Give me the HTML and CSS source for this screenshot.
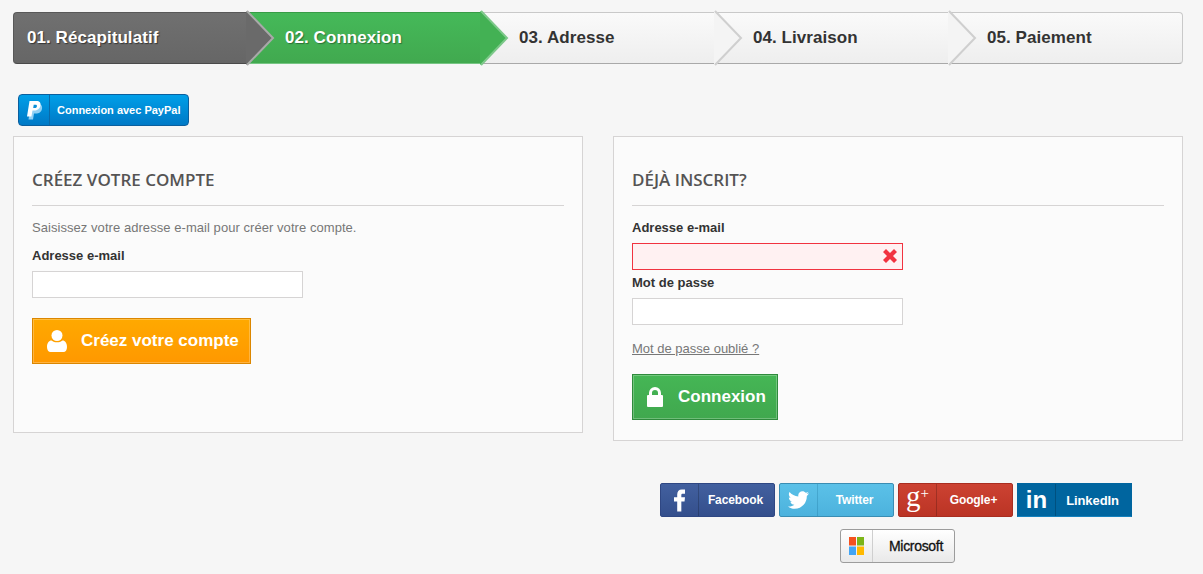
FILE: index.html
```html
<!DOCTYPE html>
<html lang="fr">
<head>
<meta charset="utf-8">
<title>Connexion</title>
<link rel="stylesheet" href="styles.css">
</head>
<body>
<div class="page">
  <ol class="steps">
    <li class="step step-done"><span>01. Récapitulatif</span><svg class="arrow" width="30" height="52" viewBox="0 0 30 52"><polygon points="-1,-1 26,26 -1,53"/><polyline points="0,-1 26,26 0,53"/></svg></li>
    <li class="step step-current"><span>02. Connexion</span><svg class="arrow" width="30" height="52" viewBox="0 0 30 52"><polygon points="-1,-1 26,26 -1,53"/><polyline points="0,-1 26,26 0,53"/></svg></li>
    <li class="step"><span>03. Adresse</span><svg class="arrow" width="30" height="52" viewBox="0 0 30 52"><polygon points="-1,-1 26,26 -1,53"/><polyline points="0,-1 26,26 0,53"/></svg></li>
    <li class="step"><span>04. Livraison</span><svg class="arrow" width="30" height="52" viewBox="0 0 30 52"><polygon points="-1,-1 26,26 -1,53"/><polyline points="0,-1 26,26 0,53"/></svg></li>
    <li class="step"><span>05. Paiement</span></li>
  </ol>

  <a class="paypal" href="#">
    <span class="paypal-icon">
      <svg width="20" height="24" viewBox="0 0 20 24"><path class="pp-back" d="M7 6h7c3.500 0 4.500 2.200 4 4.800-.6 3.400-3.200 4.800-6 4.800h-2l-1 6H4.500z"/><path class="pp-front" d="M5.500 3h6.800c3.500 0 4.700 2.100 4.200 4.600-.7 3.500-3.300 5-6.200 5H8.500l-1.100 6H3z"/><path class="pp-hole" d="M9.700 6.800h1.700c1.200 0 1.700.6 1.500 1.600-.3 1.200-1.100 1.600-2.200 1.600H9.200z"/></svg>
    </span>
    <span class="paypal-label">Connexion avec PayPal</span>
  </a>

  <div class="columns">
    <form class="panel panel-create">
      <h3 class="panel-title">Créez votre compte</h3>
      <p class="intro">Saisissez votre adresse e-mail pour créer votre compte.</p>
      <label class="label">Adresse e-mail</label>
      <input class="input" type="text">
      <a class="btn btn-orange" href="#">
        <svg class="btn-icon" width="20" height="22" viewBox="0 0 20 22"><circle cx="10" cy="5.500" r="5.500"/><path d="M0 17c0-4 2-6.500 4.500-6.500C6 11.800 8 12.300 10 12.300s4-.5 5.500-1.800C18 10.500 20 13 20 17c0 3-1.500 5-3.500 5h-13C1.500 22 0 20 0 17z"/></svg>
        <span>Créez votre compte</span>
      </a>
    </form>

    <div class="right">
      <form class="panel panel-login">
        <h3 class="panel-title">Déjà inscrit?</h3>
        <label class="label">Adresse e-mail</label>
        <div class="field">
          <input class="input input-error" type="text">
          <svg class="error-x" width="14" height="14" viewBox="0 0 14 14"><path d="M3 0l4 4 4-4 3 3-4 4 4 4-3 3-4-4-4 4-3-3 4-4-4-4z"/></svg>
        </div>
        <label class="label label-pass">Mot de passe</label>
        <input class="input" type="password">
        <p class="forgot"><a href="#">Mot de passe oublié ?</a></p>
        <a class="btn btn-green" href="#">
          <svg class="btn-icon" width="18" height="20" viewBox="0 0 18 20"><path fill-rule="evenodd" d="M3 8V6a6 6 0 0 1 12 0v2h1a1 1 0 0 1 1 1v10a1 1 0 0 1-1 1H2a1 1 0 0 1-1-1V9a1 1 0 0 1 1-1zm3 0h6V6a3 3 0 0 0-6 0z"/></svg>
          <span>Connexion</span>
        </a>
      </form>

      <div class="socials">
        <a class="social fb" href="#"><span class="social-icon"><svg width="11" height="23" viewBox="0 0 12 24"><path d="M3.500 24V13H0V8.500h3.500V5.500C3.500 2 5.500 0 8.500 0H12v4.500H9.500c-1 0-1.500.5-1.500 1.500v2.500h4l-.5 4.500H8v11z"/></svg></span><span class="social-label">Facebook</span></a>
        <a class="social tw" href="#"><span class="social-icon"><svg width="21" height="18" viewBox="0 0 24 20"><path d="M24 2.400c-.9.400-1.800.7-2.800.8 1-.6 1.800-1.600 2.200-2.700-1 .6-2 1-3.100 1.200C19.300.7 18 0 16.600 0c-2.700 0-4.900 2.200-4.900 4.900 0 .4 0 .8.100 1.100C7.700 5.800 4.100 3.800 1.700.9 1.200 1.600 1 2.500 1 3.400c0 1.700.9 3.200 2.200 4.100-.8 0-1.600-.2-2.200-.6v.1c0 2.400 1.700 4.400 3.900 4.800-.4.100-.8.200-1.300.2-.3 0-.6 0-.9-.1.600 2 2.400 3.400 4.600 3.400-1.700 1.300-3.800 2.100-6.100 2.100-.4 0-.8 0-1.200-.1C2.200 19.200 4.800 20 7.500 20c9.100 0 14-7.500 14-14v-.6c1-.7 1.800-1.600 2.500-3z"/></svg></span><span class="social-label">Twitter</span></a>
        <a class="social gp" href="#"><span class="social-icon gp-mark">g<sup>+</sup></span><span class="social-label">Google+</span></a>
        <a class="social li" href="#"><span class="social-icon li-mark">in</span><span class="social-label">LinkedIn</span></a>
        <a class="social ms" href="#"><span class="social-icon"><svg width="15" height="18" viewBox="0 0 15 18"><rect class="ms-r" width="7" height="8.500"/><rect class="ms-g" x="8" width="7" height="8.500"/><rect class="ms-b" y="9.500" width="7" height="8.500"/><rect class="ms-y" x="8" y="9.500" width="7" height="8.500"/></svg></span><span class="social-label">Microsoft</span></a>
      </div>
    </div>
  </div>
</div>
</body>
</html>
```
FILE: styles.css
```css
* { box-sizing: border-box; }
html, body { margin: 0; padding: 0; }
body {
  background: #f6f6f6;
  font-family: "Liberation Sans", Arial, sans-serif;
  font-size: 13px;
  color: #777;
}
a { text-decoration: none; }
.page { width: 1170px; margin-left: 13px; padding-top: 12px; }

/* Steps */
.steps {
  display: flex;
  list-style: none;
  margin: 0;
  padding: 0;
  height: 52px;
}
.step {
  position: relative;
  width: 234px;
  height: 52px;
  padding-left: 38px;
  display: flex;
  align-items: center;
  font-size: 17px;
  font-weight: 700;
  letter-spacing: .06px;
  color: #333;
  background: linear-gradient(#fafafa, #eeeeee);
  border-top: 1px solid #c9c9c9;
  border-bottom: 1px solid #a9a9a9;
}
.step:first-child {
  padding-left: 13px;
  border-left: 1px solid #585858;
  border-radius: 4px 0 0 4px;
}
.step:last-child {
  border-right: 1px solid #c9c9c9;
  border-radius: 0 4px 4px 0;
}
.step:nth-child(1) { z-index: 5; }
.step:nth-child(2) { z-index: 4; }
.step:nth-child(3) { z-index: 3; }
.step:nth-child(4) { z-index: 2; }
.step:nth-child(5) { z-index: 1; }
.step span { position: relative; z-index: 1; }
.arrow {
  position: absolute;
  left: 100%;
  top: -1px;
  overflow: visible;
}
.arrow polygon { fill: #f4f4f4; }
.arrow polyline { fill: none; stroke: #cfcfcf; stroke-width: 2px; }
.step-done {
  color: #fff;
  background: linear-gradient(#707070, #666666);
  border-top-color: #585858;
  border-bottom-color: #4a4a4a;
  text-shadow: 1px 1px 1px rgba(0, 0, 0, .5);
}
.step-done .arrow polygon { fill: #6a6a6a; }
.step-done .arrow polyline { stroke: #a9a9a9; }
.step-current {
  color: #fff;
  background: linear-gradient(#45b959, #41a94f);
  border-top-color: #379c46;
  border-bottom-color: #76c583;
  text-shadow: 1px 1px 1px rgba(0, 0, 0, .35);
}
.step-current .arrow polygon { fill: #43b154; }
.step-current .arrow polyline { stroke: #7cc889; }

/* PayPal */
.paypal {
  display: flex;
  align-items: center;
  width: 171px;
  height: 32px;
  margin: 30px 0 10px 5px;
  color: #fff;
  font-size: 11px;
  font-weight: 700;
  background: linear-gradient(#009fe8, #0079c6);
  border: 1px solid #0b5f9e;
  border-radius: 4px;
}
.paypal-icon {
  width: 31px;
  height: 100%;
  flex: none;
  display: flex;
  align-items: center;
  justify-content: center;
  border-right: 1px solid #0b6aa8;
}
.pp-back { fill: #8fd0f5; }
.pp-front { fill: #fff; }
.pp-hole { fill: #0a8fd8; }
.paypal-label { padding-left: 7px; }

/* Columns */
.columns { display: flex; gap: 30px; align-items: flex-start; }
.columns > * { width: 570px; flex: none; }
.panel {
  display: block;
  background: #fbfbfb;
  border: 1px solid #d6d4d4;
  padding: 31px 18px 0;
}
.panel-create { height: 297px; }
.panel-login { height: 305px; }
.panel-title {
  margin: 0 0 14px;
  height: 38px;
  font-family: "Open Sans", sans-serif;
  font-size: 17px;
  line-height: 24px;
  font-weight: 600;
  color: #555454;
  text-transform: uppercase;
  border-bottom: 1px solid #d6d4d4;
}
.intro { margin: 0 0 12px; line-height: 16px; font-size: 13px; letter-spacing: .055px; }
.label {
  display: block;
  font-weight: 700;
  color: #333;
  line-height: 16px;
  margin-bottom: 7px;
}
.label-pass { margin-top: 5px; }
.input {
  display: block;
  width: 271px;
  height: 27px;
  padding: 3px 5px;
  background: #fff;
  border: 1px solid #d6d4d4;
  border-radius: 0;
  outline: none;
}
.field { position: relative; width: 271px; }
.input-error { background: #fff1f2; border-color: #f13340; }
.error-x {
  position: absolute;
  right: 6px;
  top: 6px;
  fill: #f13340;
}
.forgot { margin: 16px 0 17px; line-height: 16px; }
.forgot a { color: #777; text-decoration: underline; }

/* Buttons */
.btn {
  display: inline-flex;
  align-items: center;
  height: 46px;
  color: #fff;
  font-size: 17px;
  font-weight: 700;
  border: 1px solid;
  box-shadow: inset 0 0 0 1px rgba(255, 255, 255, .25);
}
.btn-icon { fill: #fff; flex: none; }
.btn-orange {
  margin-top: 20px;
  width: 219px;
  padding-left: 14px;
  gap: 14px;
  background: linear-gradient(#ffa900, #ff9800);
  border-color: #db8600;
}
.btn-green {
  width: 146px;
  padding-left: 13px;
  gap: 14px;
  background: linear-gradient(#45b655, #40a84e);
  border-color: #2f8a3c;
}

/* Socials */
.socials {
  display: flex;
  flex-wrap: wrap;
  justify-content: center;
  gap: 12px 4px;
  width: 476px;
  margin: 42px 0 0 45px;
}
.social {
  display: flex;
  align-items: center;
  width: 115px;
  height: 34px;
  color: #fff;
  font-size: 11px;
  font-weight: 700;
  border: 1px solid;
  border-radius: 2px;
}
.social-icon {
  width: 38px;
  height: 100%;
  flex: none;
  display: flex;
  align-items: center;
  justify-content: center;
  border-right: 1px solid rgba(0, 0, 0, .2);
}
.social-icon svg { fill: #fff; }
.social-label { flex: 1; text-align: center; font-size: 12px; letter-spacing: -.1px; padding-right: 2px; }
.fb { background: linear-gradient(#42609f, #344f8c); border-color: #2f4783; }
.tw { background: linear-gradient(#5bc1e8, #4cb2dd); border-color: #3a8db3; }
.tw .social-icon { border-right-color: rgba(0, 80, 120, .2); }
.gp { background: linear-gradient(#cc4232, #bb3425); border-color: #a92d20; }
.gp-mark {
  font-family: "Liberation Serif", serif;
  font-size: 29px;
  font-weight: 400;
  line-height: 1;
  padding-bottom: 7px;
}
.gp-mark sup { font-size: 15px; line-height: 0; align-self: flex-start; margin-top: 9px; }
.li { background: #00659f; border-color: #00659f; border-bottom-color: #1481bd; border-radius: 0; }
.li-mark { font-size: 24px; font-weight: 700; }
.li .social-label { font-size: 13px; letter-spacing: -.1px; }
.ms {
  margin-left: 3px;
  color: #111;
  background: linear-gradient(#ffffff, #e9e9e9);
  border-color: #9c9c9c;
  border-radius: 3px;
}
.ms .social-label { font-size: 14px; font-weight: 400; letter-spacing: -.3px; -webkit-text-stroke: .3px #111; padding: 0 0 0 5px; }
.ms .social-icon { width: 32px; border-right-color: #cfcfcf; }
.ms-r { fill: #f4511e; }
.ms-g { fill: #7cb518; }
.ms-b { fill: #42a5f5; }
.ms-y { fill: #ffb900; }
```
